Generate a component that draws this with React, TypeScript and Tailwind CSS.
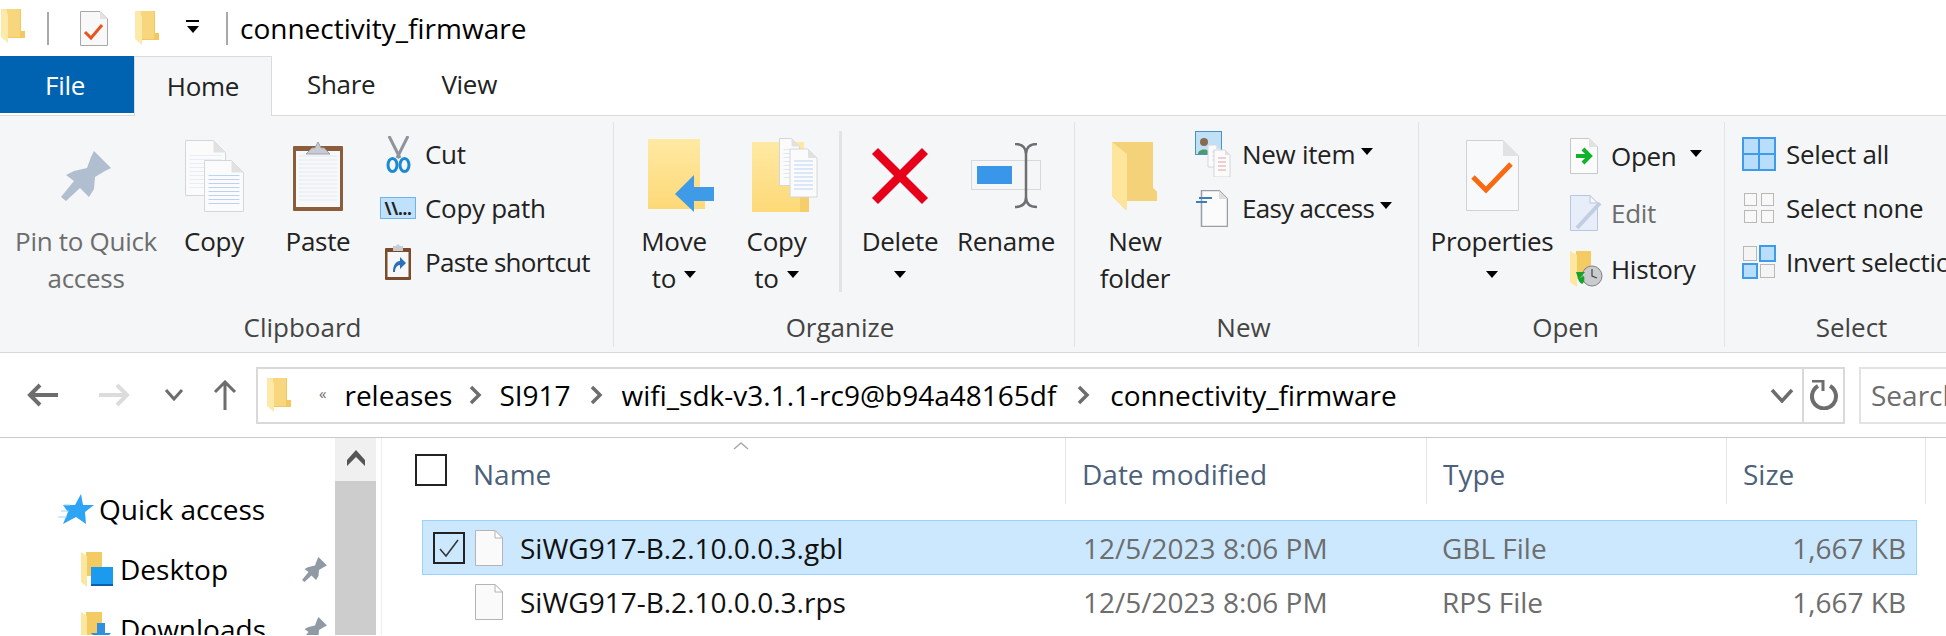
import React from 'react';

const Caret = ({ className = '' }: { className?: string }) => (
  <svg width="12" height="7" viewBox="0 0 12 7" className={className}>
    <polygon points="0,0 12,0 6,7" fill="#000" />
  </svg>
);

const SideFolder = ({ w = 24, h = 34 }: { w?: number; h?: number }) => (
  <svg width={w} height={h} viewBox="0 0 24 34">
    <path d="M6 0H20V22H24V29H6Z" fill="#f2c960" />
    <path d="M0 0H19V28H6Z" fill="#fbdc8c" opacity="0.7" />
    <path d="M0 0L7 5V34L0 28Z" fill="#fde9a8" />
  </svg>
);

const QuickCheckDoc = () => (
  <svg width="28" height="35" viewBox="0 0 28 35">
    <path d="M.5.5H20L27.5 8V34.5H.5Z" fill="#f8f8f8" stroke="#a8a8a8" />
    <path d="M20 .5V8H27.5Z" fill="#e2e2e2" />
    <path d="M5 21L11 27L22 14" fill="none" stroke="#e9541c" strokeWidth="3" />
  </svg>
);

const Pin = ({ s = 50, color = '#b1bed0' }: { s?: number; color?: string }) => (
  <svg width={s} height={s} viewBox="0 0 50 50">
    <path d="M33 0L50 17L44 20L34 26L33 38L28 46L19 37L5 50L0 46L13 30L5 24L13 20L26 17L30 6Z" fill={color} />
  </svg>
);

const Page = ({ x, y, w, h, line, fold = 12 }: { x: number; y: number; w: number; h: number; line: string; fold?: number }) => {
  const rows = [];
  for (let ly = y + fold + 3; ly < y + h - 4; ly += 4) rows.push(ly);
  return (
    <g>
      <path d={`M${x} ${y}H${x + w - fold}L${x + w} ${y + fold}V${y + h}H${x}Z`} fill="#fbfbfc" stroke="#d3d6da" />
      <path d={`M${x + w - fold} ${y}V${y + fold}H${x + w}Z`} fill="#e1e1e1" />
      {rows.map((ly) => (
        <line key={ly} x1={x + 4} x2={x + w - 4} y1={ly} y2={ly} stroke={line} />
      ))}
    </g>
  );
};

const CopyIcon = () => (
  <svg width="59" height="72" viewBox="0 0 59 72">
    <Page x={0.5} y={0.5} w={40} h={55} line="#e8eef7" />
    <Page x={19.5} y={20.5} w={39} h={51} line="#bad3f5" />
  </svg>
);

const PasteIcon = () => (
  <svg width="50" height="71" viewBox="0 0 50 71">
    <rect x="0" y="6" width="50" height="65" rx="1" fill="#8b5d3b" />
    <rect x="3" y="11" width="44" height="56" fill="#f7f8f9" />
    {[16, 20, 24, 28, 32, 36, 40, 44, 48, 52, 56, 60].map((y) => (
      <line key={y} x1="6" x2="44" y1={y} y2={y} stroke="#e3e9f1" />
    ))}
    <path d="M13 14L19 8H22L25 2L28 8H31L37 14Z" fill="#c8ccd2" stroke="#9ea3a9" />
  </svg>
);

const Scissors = () => (
  <svg width="25" height="37" viewBox="0 0 25 37">
    <path d="M3 0L14 22M22 0L11 22" stroke="#8e949b" strokeWidth="3" fill="none" />
    <ellipse cx="6.5" cy="29" rx="4.5" ry="6.5" fill="none" stroke="#1b8ad0" strokeWidth="3" />
    <ellipse cx="18.5" cy="29" rx="4.5" ry="6.5" fill="none" stroke="#1b8ad0" strokeWidth="3" />
  </svg>
);

const CopyPathIcon = () => (
  <div className="w-[36px] h-[22px] bg-[#bfe1fb] border border-[#6db3ec] flex items-center justify-center text-[17px] leading-none font-bold text-[#222]">
    \\...
  </div>
);

const PasteShortcut = () => (
  <svg width="26" height="36" viewBox="0 0 26 36">
    <rect x="0" y="4" width="26" height="32" rx="1" fill="#7b4c2c" />
    <rect x="2.500" y="8" width="21" height="25" fill="#f6f7f8" />
    <path d="M8 2H11L13 0L15 2H18V7H8Z" fill="#c8ccd2" />
    <path d="M8 28C8 21 11 17 15 17V13L21 19L15 25V21C12 21 10 24 10 28Z" fill="#2a6fb8" />
  </svg>
);

const FolderFill = ({ id }: { id: string }) => (
  <defs>
    <linearGradient id={id} x1="0" y1="0" x2="0" y2="1">
      <stop offset="0" stopColor="#ffe9a3" />
      <stop offset="1" stopColor="#fdd977" />
    </linearGradient>
  </defs>
);

const MoveToIcon = () => (
  <svg width="66" height="74" viewBox="0 0 66 74" className="ml-[14px]">
    <FolderFill id="moveFill" />
    <path d="M0 0H52V52H57V70H0Z" fill="url(#moveFill)" />
    <path d="M27 55L46 36V48H66V62H46V73Z" fill="#3f9ae8" />
  </svg>
);

const CopyToIcon = () => (
  <svg width="66" height="76" viewBox="0 0 66 76" className="ml-[16px]">
    <FolderFill id="copyFill" />
    <path d="M0 4H52V52H57V74H0Z" fill="url(#copyFill)" />
    <path d="M48 52L57 56V74H48Z" fill="#f5cd6a" />
    <Page x={27.500} y={0.5} w={20} h={47} line="#dfe8f5" fold={8} />
    <Page x={38} y={11} w={27} h={48} line="#bad3f5" fold={9} />
  </svg>
);

const DeleteIcon = () => (
  <svg width="58" height="58" viewBox="0 0 58 58">
    <path d="M4 4L54 54M54 4L4 54" stroke="#e6001a" strokeWidth="8.500" />
  </svg>
);

const RenameIcon = () => (
  <svg width="70" height="66" viewBox="0 0 70 66">
    <rect x="0.5" y="17.500" width="69" height="29" fill="none" stroke="#d6d8db" />
    <rect x="6" y="23" width="35" height="18" fill="#3a96e8" />
    <path d="M44 1C52 1 55 5 55 11V54C55 60 52 64 44 64M66 1C58 1 55 5 55 11M55 54C55 60 58 64 66 64" fill="none" stroke="#6d7073" strokeWidth="2.500" />
  </svg>
);

const NewFolderIcon = () => (
  <svg width="46" height="68" viewBox="0 0 46 68">
    <path d="M0 0H41V46L45 50V59H14V68L0 54Z" fill="#f5d57f" />
    <path d="M0 0H41V46L45 50V59H15V12Z" fill="#f4d27a" />
    <path d="M0 0L15 12V68L0 54Z" fill="#fde59b" />
  </svg>
);

const NewItemIcon = () => (
  <svg width="36" height="46" viewBox="0 0 36 46">
    <rect x="0.5" y="0.500" width="26" height="23" fill="#bfe0f7" stroke="#4a94c4" />
    <circle cx="9" cy="11" r="4" fill="#8a6a4c" />
    <path d="M3 23C3 17 15 17 15 23Z" fill="#4d9a6a" />
    <Page x={13} y={14} w={12} h={22} line="#cfd8e6" fold={4} />
    <Page x={19} y={19} w={16} h={27} line="#e0a0a8" fold={5} />
  </svg>
);

const EasyAccessIcon = () => (
  <svg width="33" height="37" viewBox="0 0 33 37">
    <path d="M6.500.5H24L32.500 9V36.500H6.500Z" fill="#fbfbfc" stroke="#9b9fa4" strokeWidth="1.500" />
    <path d="M24 .5V9H32.500Z" fill="#dedede" />
    <path d="M4 8H17M1 12H12" stroke="#3f7fb8" strokeWidth="2" />
  </svg>
);

const PropertiesIcon = () => (
  <svg width="53" height="71" viewBox="0 0 53 71">
    <path d="M.5.5H37L52.500 16V70.500H.5Z" fill="#f8f9fa" stroke="#cfd1d4" />
    <path d="M37 .5V16H52.500Z" fill="#e2e2e2" />
    <path d="M7 37L20 50L45 24" fill="none" stroke="#f76a12" strokeWidth="5" />
  </svg>
);

const OpenIcon = () => (
  <svg width="28" height="36" viewBox="0 0 28 36">
    <path d="M.5.5H19L27.500 9V35.500H.5Z" fill="#fbfbfb" stroke="#c6c8ca" />
    <path d="M19 .5V9H27.500Z" fill="#e2e2e2" />
    <path d="M6 18H18M13 11L20 18L13 25" fill="none" stroke="#0fb32b" strokeWidth="4" />
  </svg>
);

const EditIcon = () => (
  <svg width="33" height="36" viewBox="0 0 33 36">
    <path d="M.5.5H20L27.500 8V35.500H.5Z" fill="#e7eef9" stroke="#b9c7de" />
    <path d="M20 .5V8H27.500Z" fill="#f6f8fb" stroke="#b9c7de" />
    <path d="M7 33L30 8" stroke="#c2cde0" strokeWidth="4" />
  </svg>
);

const HistoryIcon = () => (
  <svg width="33" height="36" viewBox="0 0 33 36">
    <path d="M6 0H21V28H6Z" fill="#f3cb62" />
    <path d="M0 0L7 4V36L0 31Z" fill="#fde69f" />
    <circle cx="22" cy="25" r="10" fill="#c9cbce" stroke="#7e8184" />
    <path d="M22 18V25L27 27" stroke="#444" strokeWidth="1.200" fill="none" />
    <path d="M6 21H15L10 27L14 25C15 29 14 32 12 33C9 31 8 29 8 27Z" fill="#16a32c" />
  </svg>
);

const GridIcon = ({ kind }: { kind: 'all' | 'none' | 'invert' }) => {
  if (kind === 'all') {
    return (
      <div className="w-[34px] h-[34px] bg-[#3d9be9] grid grid-cols-2 gap-[2px] p-[2px]">
        {[0, 1, 2, 3].map((i) => <div key={i} className="bg-[#b9defb]" />)}
      </div>
    );
  }
  if (kind === 'none') {
    return (
      <div className="w-[30px] h-[30px] grid grid-cols-2 gap-[4px]">
        {[0, 1, 2, 3].map((i) => <div key={i} className="bg-[#f8f8f8] border border-[#b8b8b8]" />)}
      </div>
    );
  }
  return (
    <div className="w-[34px] h-[34px] grid grid-cols-2 gap-[1px]">
      <div className="bg-[#f4f4f4] border border-[#b8b8b8] m-[1px]" />
      <div className="bg-[#b9defb] border-2 border-[#3d9be9]" />
      <div className="bg-[#b9defb] border-2 border-[#3d9be9]" />
      <div className="bg-[#f4f4f4] border border-[#b8b8b8] m-[1px]" />
    </div>
  );
};

const Star = () => (
  <svg width="36" height="30" viewBox="0 0 36 30">
    <path d="M23 0L25 11H36L27 18L28 30L18 23L5 30L10 18L5 11H17Z" fill="#2ea4f4" />
    <path d="M0 23H9M3 17H11M6 11H12" stroke="#9fd4f8" strokeWidth="1" />
  </svg>
);

const DesktopIcon = () => (
  <svg width="32" height="35" viewBox="0 0 32 35">
    <path d="M5 0H21V24H5Z" fill="#f3cb62" />
    <path d="M0 0L6 4V35L0 30Z" fill="#fde69f" />
    <rect x="10" y="15" width="22" height="19" fill="#1b9bf0" />
    <rect x="10" y="32" width="22" height="2" fill="#0c5fa8" />
  </svg>
);

const DownloadsIcon = () => (
  <svg width="32" height="35" viewBox="0 0 32 35">
    <path d="M5 0H21V24H5Z" fill="#f3cb62" />
    <path d="M0 0L6 4V35L0 30Z" fill="#fde69f" />
    <path d="M16 11H24V21H30L20 32L10 21H16Z" fill="#2f8fe0" />
  </svg>
);

const FileDoc = () => (
  <svg width="28" height="36" viewBox="0 0 28 36">
    <path d="M.5.5H20L27.500 8V35.500H.5Z" fill="#fafafa" stroke="#b4b4b4" />
    <path d="M20 .5V8H27.500Z" fill="#fff" stroke="#b4b4b4" />
  </svg>
);

const Crumb = () => (
  <svg width="13" height="22" viewBox="0 0 13 22" className="shrink-0">
    <path d="M2 3L10 11L2 19" fill="none" stroke="#6d6d6d" strokeWidth="3.500" />
  </svg>
);

const Large = ({ w, icon, lines, caret, inline, disabled }: {
  w: number;
  icon: React.ReactNode;
  lines: string[];
  caret?: boolean;
  inline?: boolean;
  disabled?: boolean;
}) => (
  <div className="flex flex-col items-center shrink-0" style={{ width: w }}>
    <div className="h-[95px] flex items-center justify-center">{icon}</div>
    {lines.map((l, i) => (
      <div key={l} className={`h-[37px] leading-[37px] flex items-center gap-[8px] whitespace-nowrap ${disabled ? 'text-[#6d6d6d]' : ''}`}>
        {l}
        {inline && i === lines.length - 1 && <Caret className="mb-[8px]" />}
      </div>
    ))}
    {caret && <div className="h-[37px] flex items-center"><Caret className="mb-[8px]" /></div>}
  </div>
);

const Small = ({ icon, label, box = 46, gap = 0, labelClass = '' }: {
  icon: React.ReactNode;
  label: string;
  box?: number;
  gap?: number;
  labelClass?: string;
}) => (
  <div className="h-[54px] flex items-center whitespace-nowrap">
    <div className="flex items-center justify-center shrink-0" style={{ width: box, marginRight: gap }}>{icon}</div>
    <span className={labelClass}>{label}</span>
  </div>
);

const Group = ({ w, label, labelClass = '', children }: { w: number; label: string; labelClass?: string; children: React.ReactNode }) => (
  <div className="flex flex-col shrink-0 border-r border-[#e1e3e6] h-[225px]" style={{ width: w }}>
    <div className="flex flex-1 pt-[6px]">{children}</div>
    <div className={`h-[37px] leading-[35px] text-center text-[#444] tracking-normal ${labelClass}`}>{label}</div>
  </div>
);

const Row = ({ name, type, selected, h }: { name: string; type: string; selected?: boolean; h: string }) => (
  <div className={`flex items-center ${h} border ${selected ? 'bg-[#cce8ff] border-[#99d1ff]' : 'border-transparent'}`}>
    <div className="w-[660px] flex items-center shrink-0">
      <div className="ml-[10px] w-[32px] h-[32px] shrink-0">
        {selected && (
          <div className="w-[32px] h-[32px] border-2 border-[#222] flex items-center justify-center">
            <svg width="24" height="20" viewBox="0 0 24 20">
              <path d="M3 11L9 18L21 2" fill="none" stroke="#333" strokeWidth="1.500" />
            </svg>
          </div>
        )}
      </div>
      <div className="ml-[10px] shrink-0 flex"><FileDoc /></div>
      <span className="ml-[17px] text-[#111]">{name}</span>
    </div>
    <div className="w-[359px] shrink-0 text-[#6d6d6d]">12/5/2023 8:06 PM</div>
    <div className="w-[300px] shrink-0 text-[#6d6d6d]">{type}</div>
    <div className="flex-1 text-right pr-[10px] text-[#6d6d6d]">1,667 KB</div>
  </div>
);

const Header = ({ w, label }: { w: number; label: string }) => (
  <div className="h-[66px] flex items-center pl-[16px] border-r border-[#e5e5e5] shrink-0 text-[#4c607a] pt-[5px]" style={{ width: w }}>
    {label}
  </div>
);

export default function App() {
  return (
    <div className="w-[1946px] h-[636px] overflow-hidden bg-white text-[26px] text-[#222] font-['Open_Sans',sans-serif] tracking-[-0.3px]">
      {/* title bar */}
      <div className="h-[56px] flex items-center">
        <div className="ml-[1px] mb-[5px] flex"><SideFolder /></div>
        <div className="ml-[22px] w-[2px] h-[33px] bg-[#a9a9a9]" />
        <div className="ml-[31px] flex"><QuickCheckDoc /></div>
        <div className="ml-[27px] flex"><SideFolder /></div>
        <div className="ml-[27px] flex flex-col items-center gap-[4px] w-[13px] mb-[4px]">
          <div className="w-[13px] h-[2px] bg-black" />
          <Caret />
        </div>
        <div className="ml-[27px] w-[2px] h-[33px] bg-[#a9a9a9]" />
        <div className="ml-[12px] text-black text-[28px] tracking-normal">connectivity_firmware</div>
      </div>

      {/* tabs */}
      <div className="h-[60px] flex border-b border-[#dadbdc] relative">
        <div className="w-[134px] h-[57px] bg-[#0063b1] text-white flex items-center justify-center pr-[4px] pt-[1px]">File</div>
        <div className="w-[138px] h-[60px] bg-[#f5f6f7] border-t border-r border-l border-[#dadbdc] flex items-center justify-center">Home</div>
        <div className="ml-[35px] flex items-center mb-[2px]">Share</div>
        <div className="ml-[66px] flex items-center mb-[2px]">View</div>
      </div>

      {/* ribbon */}
      <div className="h-[237px] bg-[#f5f6f7] border-b border-[#d9d9d9] flex pt-[6px] overflow-hidden">
        <Group w={614} label="Clipboard" labelClass="pr-[8px]">
          <div className="ml-[14px] flex">
            <Large w={144} icon={<Pin />} lines={['Pin to Quick', 'access']} disabled />
            <Large w={112} icon={<CopyIcon />} lines={['Copy']} />
            <Large w={96} icon={<PasteIcon />} lines={['Paste']} />
          </div>
          <div className="ml-[14px] -mt-[1px]">
            <Small icon={<Scissors />} label="Cut" box={36} gap={9} />
            <Small icon={<CopyPathIcon />} label="Copy path" box={36} gap={9} />
            <Small icon={<PasteShortcut />} label="Paste shortcut" box={36} gap={9} labelClass="tracking-[-0.7px]" />
          </div>
        </Group>
        <Group w={461} label="Organize" labelClass="pr-[8px]">
          <div className="ml-[4px] flex">
            <Large w={112} icon={<MoveToIcon />} lines={['Move', 'to']} inline />
            <Large w={93} icon={<CopyToIcon />} lines={['Copy', 'to']} inline />
          </div>
          <div className="ml-[16px] w-[3px] h-[161px] mt-[3px] bg-[#e2e3e5]" />
          <div className="flex">
            <Large w={116} icon={<DeleteIcon />} lines={['Delete']} caret />
            <Large w={96} icon={<RenameIcon />} lines={['Rename']} />
          </div>
        </Group>
        <Group w={344} label="New" labelClass="pr-[6px]">
          <Large w={120} icon={<NewFolderIcon />} lines={['New', 'folder']} />
          <div className="-mt-[1px]">
            <div className="h-[54px] flex items-center whitespace-nowrap">
              <div className="w-[47px] h-[46px] shrink-0 flex"><NewItemIcon /></div>
              New item
              <Caret className="ml-[6px] mb-[6px]" />
            </div>
            <div className="h-[54px] flex items-center whitespace-nowrap">
              <div className="w-[47px] shrink-0 flex"><EasyAccessIcon /></div>
              <span className="tracking-[-0.7px]">Easy access</span>
              <Caret className="ml-[6px] mb-[6px]" />
            </div>
          </div>
        </Group>
        <Group w={306} label="Open" labelClass="pr-[12px]">
          <Large w={146} icon={<PropertiesIcon />} lines={['Properties']} caret />
          <div className="ml-[5px]">
            <div className="h-[54px] mt-[1px] flex items-center whitespace-nowrap">
              <div className="w-[41px] shrink-0 flex"><OpenIcon /></div>
              Open
              <Caret className="ml-[14px] mb-[6px]" />
            </div>
            <div className="h-[56px] mt-[2px] flex items-center whitespace-nowrap text-[#6d6d6d]">
              <div className="w-[41px] shrink-0 flex"><EditIcon /></div>
              Edit
            </div>
            <div className="h-[56px] flex items-center whitespace-nowrap">
              <div className="w-[41px] shrink-0 flex"><HistoryIcon /></div>
              History
            </div>
          </div>
        </Group>
        <Group w={254} label="Select">
          <div className="ml-[6px] -mt-[1px]">
            <Small icon={<GridIcon kind="all" />} label="Select all" box={55} />
            <Small icon={<GridIcon kind="none" />} label="Select none" box={55} />
            <Small icon={<GridIcon kind="invert" />} label="Invert selection" box={55} />
          </div>
        </Group>
      </div>

      {/* navigation bar */}
      <div className="h-[85px] flex items-center border-b border-[#c9c9c9] text-[28px] tracking-normal">
        <svg width="32" height="24" viewBox="0 0 32 24" className="ml-[26px] shrink-0">
          <path d="M32 12H5M14 2L4 12L14 22" fill="none" stroke="#6d6d6d" strokeWidth="4" />
        </svg>
        <svg width="32" height="24" viewBox="0 0 32 24" className="ml-[41px] shrink-0">
          <path d="M0 12H27M18 2L28 12L18 22" fill="none" stroke="#dcdcdc" strokeWidth="4" />
        </svg>
        <svg width="20" height="12" viewBox="0 0 20 12" className="ml-[33px] shrink-0">
          <path d="M2 1L10 10L18 1" fill="none" stroke="#6d6d6d" strokeWidth="3" />
        </svg>
        <svg width="24" height="30" viewBox="0 0 24 30" className="ml-[29px] shrink-0">
          <path d="M12 30V3M2 12L12 2L22 12" fill="none" stroke="#6d6d6d" strokeWidth="3" />
        </svg>
        <div className="ml-[19px] w-[1589px] h-[57px] border-2 border-[#d9d9d9] flex items-center shrink-0 text-black">
          <div className="ml-[9px] flex"><SideFolder /></div>
          <span className="ml-[28px] text-[15px] leading-none text-[#6d6d6d] mb-[4px]">«</span>
          <span className="ml-[18px]">releases</span>
          <div className="ml-[17px] flex"><Crumb /></div>
          <span className="ml-[17px]">SI917</span>
          <div className="ml-[19px] flex"><Crumb /></div>
          <span className="ml-[19px]">wifi_sdk-v3.1.1-rc9@b94a48165df</span>
          <div className="ml-[21px] flex"><Crumb /></div>
          <span className="ml-[20px]">connectivity_firmware</span>
          <div className="flex-1" />
          <svg width="24" height="15" viewBox="0 0 24 15" className="mr-[8px]">
            <path d="M2 2L12 13L22 2" fill="none" stroke="#6d6d6d" strokeWidth="3.500" />
          </svg>
          <div className="w-[41px] h-full border-l-2 border-[#d9d9d9] flex items-center justify-center">
            <svg width="30" height="30" viewBox="0 0 30 30">
              <path d="M9 6A12 12 0 1 0 21 6" fill="none" stroke="#6d6d6d" strokeWidth="4" />
              <path d="M3 1H14V11" fill="none" stroke="#6d6d6d" strokeWidth="3" />
            </svg>
          </div>
        </div>
        <div className="ml-[14px] w-[200px] h-[57px] border-2 border-[#e3e3e3] flex items-center pl-[10px] text-[#6d6d6d] shrink-0">
          Search
        </div>
      </div>

      {/* content */}
      <div className="flex h-[197px] overflow-hidden text-[28px] tracking-normal">
        <div className="w-[335px] shrink-0 pt-[41px] text-black">
          <div className="h-[60px] flex items-center pl-[58px]">
            <div className="w-[41px] flex"><Star /></div>
            Quick access
          </div>
          <div className="h-[60px] flex items-center pl-[81px]">
            <div className="w-[39px] flex shrink-0"><DesktopIcon /></div>
            <span className="flex-1">Desktop</span>
            <div className="mr-[8px] flex"><Pin s={25} color="#8f9aa5" /></div>
          </div>
          <div className="h-[60px] flex items-center pl-[81px]">
            <div className="w-[39px] flex shrink-0"><DownloadsIcon /></div>
            <span className="flex-1">Downloads</span>
            <div className="mr-[8px] flex"><Pin s={25} color="#8f9aa5" /></div>
          </div>
        </div>
        <div className="w-[41px] shrink-0 bg-[#cdcdcd]">
          <div className="h-[43px] bg-[#f0f0f0] flex justify-center pt-[12px]">
            <svg width="18" height="16" viewBox="0 0 18 16">
              <path d="M9 0L18 10V16L9 7L0 16V10Z" fill="#555" />
            </svg>
          </div>
        </div>
        <div className="w-[6px] shrink-0 border-r border-[#eeeeee]" />
        <div className="flex-1 relative">
          <svg width="16" height="8" viewBox="0 0 16 8" className="absolute left-[351px] top-[4px]">
            <path d="M1 7L8 1L15 7" fill="none" stroke="#a8a8a8" strokeWidth="1.500" />
          </svg>
          <div className="flex">
            <div className="w-[684px] h-[66px] flex items-center border-r border-[#e5e5e5] shrink-0 text-[#4c607a]">
              <div className="ml-[33px] mb-[2px] w-[32px] h-[32px] border-2 border-[#222] shrink-0" />
              <span className="ml-[26px] pt-[5px]">Name</span>
            </div>
            <Header w={361} label="Date modified" />
            <Header w={300} label="Type" />
            <Header w={199} label="Size" />
          </div>
          <div className="ml-[40px] w-[1495px] mt-[16px] flex flex-col">
            <Row name="SiWG917-B.2.10.0.0.3.gbl" type="GBL File" selected h="h-[55px]" />
            <Row name="SiWG917-B.2.10.0.0.3.rps" type="RPS File" h="h-[54px]" />
          </div>
        </div>
      </div>
    </div>
  );
}
